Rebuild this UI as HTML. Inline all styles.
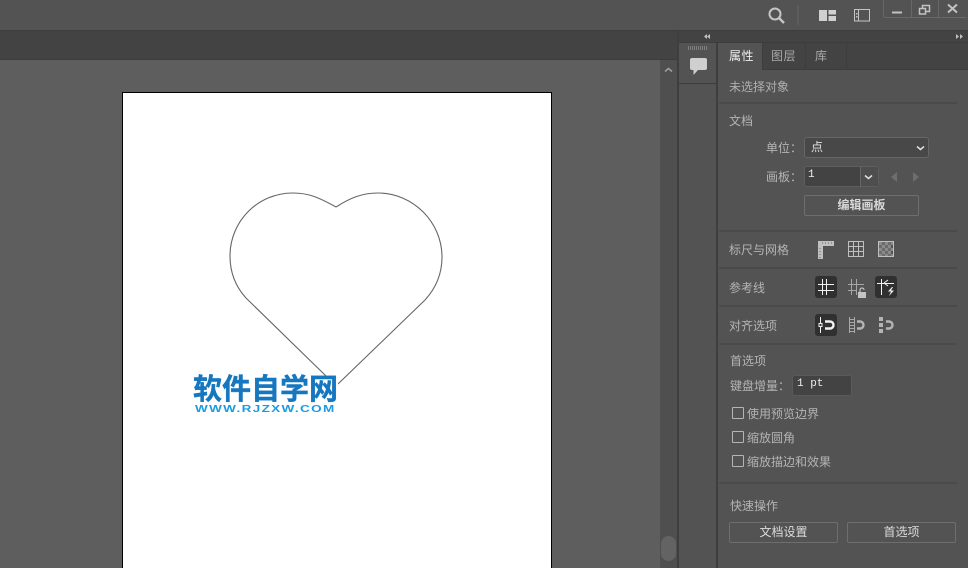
<!DOCTYPE html>
<html><head><meta charset="utf-8">
<style>
html,body{margin:0;padding:0;background:#535353}
#r{position:relative;width:968px;height:568px;overflow:hidden;background:#535353;font-family:"Liberation Sans","Noto Sans CJK SC",sans-serif;font-size:12px;color:#b8b8b8}
.a{position:absolute}
.t{position:absolute;white-space:nowrap;line-height:16px;font-size:12px;color:#b4b4b4}
.l{position:absolute;left:719px;width:238px;height:2px;background:#4a4a4a}
.bx{position:absolute;box-sizing:border-box;border:1px solid #666;border-radius:3px}
.btn{position:absolute;box-sizing:border-box;border:1px solid #6e6e6e;border-radius:2px;text-align:center;color:#dcdcdc;font-size:12px;line-height:19px}
.cb{position:absolute;left:732px;width:12px;height:12px;box-sizing:border-box;border:1px solid #b4b4b4;border-radius:1px}
svg{position:absolute;left:0;top:0}
</style></head><body><div id="r">

<!-- document tab strip and canvas -->
<div class="a" style="left:0;top:30px;width:677px;height:30px;background:#434343;border-top:1px solid #3d3d3d;border-bottom:1px solid #3d3d3d;box-sizing:border-box"></div>
<div class="a" style="left:0;top:60px;width:660px;height:508px;background:#5e5e5e"></div>
<div class="a" style="left:660px;top:60px;width:17px;height:508px;background:#4f4f4f"></div>
<div class="a" style="left:661px;top:536px;width:15px;height:25px;border-radius:8px;background:#636363"></div>

<!-- artboard -->
<div class="a" style="left:122px;top:92px;width:428px;height:480px;background:#fff;border:1px solid #000"></div>

<!-- panel structure -->
<div class="a" style="left:677px;top:30px;width:2px;height:538px;background:#3e3e3e"></div>
<div class="a" style="left:679px;top:30px;width:289px;height:13px;background:#434343;border-top:1px solid #3d3d3d;border-bottom:1px solid #3d3d3d;box-sizing:border-box"></div>
<div class="a" style="left:716px;top:42px;width:2px;height:526px;background:#3e3e3e"></div>
<div class="a" style="left:679px;top:83px;width:37px;height:1px;background:#3d3d3d"></div>
<div class="a" style="left:718px;top:43px;width:250px;height:27px;background:#434343;border-bottom:1px solid #3d3d3d;box-sizing:border-box"></div>
<div class="a" style="left:718px;top:43px;width:44px;height:27px;background:#535353"></div>
<div class="a" style="left:762px;top:43px;width:1px;height:27px;background:#3d3d3d"></div>
<div class="a" style="left:805px;top:43px;width:1px;height:26px;background:#3d3d3d"></div>
<div class="a" style="left:846px;top:43px;width:1px;height:26px;background:#3d3d3d"></div>

<svg width="968" height="568" viewBox="0 0 968 568" fill="none">
  <!-- heart -->
  <path d="M336 207C318 197 308 193 293 193C258 193 230 221 230 256C230 273 236 287 246 298L326 376" stroke="#666" stroke-width="1.1"/>
  <path d="M336 207C350 198 362 193 378 193C413 193 442 222 442 257C442 274 436 288 425 300L338 384" stroke="#666" stroke-width="1.1"/>

  <!-- search -->
  <circle cx="775" cy="14" r="5.500" stroke="#c6c6c6" stroke-width="2"/>
  <path d="M779 18L784 23" stroke="#c6c6c6" stroke-width="2.400"/>
  <path d="M798 5V25" stroke="#606060" stroke-width="1.500"/>
  <!-- workspace icons -->
  <path d="M819 10h8v11h-8zM828.500 10h7.500v4.500h-7.500zM828.500 16h7.500v5h-7.500z" fill="#d0d0d0"/>
  <rect x="854.500" y="9.500" width="15" height="11.500" stroke="#c4c4c4"/>
  <path d="M858.500 10v11" stroke="#c4c4c4"/>
  <path d="M856 13h1.500v1.500h-1.500zM856 16h1.500v1.500h-1.500z" fill="#c4c4c4"/>
  <!-- window controls -->
  <path d="M883.500 0V15.500a2 2 0 0 0 2 2H966.500" stroke="#686868"/>
  <path d="M911.500 0V17M938.500 0V17" stroke="#686868"/>
  <path d="M892 12.500h10" stroke="#c2c2c2" stroke-width="2"/>
  <path d="M919.500 8.500h6v5.500h-6zM922.500 8V5.500h7v6h-3.500" stroke="#c2c2c2" stroke-width="1.500"/>
  <path d="M948 4.500L957 12.500M957 4.500L948 12.500" stroke="#c2c2c2" stroke-width="2"/>

  <!-- collapse arrows -->
  <path d="M707 34l-3 2.500 3 2.500zM710 34l-3 2.500 3 2.500z" fill="#c0c0c0"/>
  <path d="M956 34l3 2.500-3 2.500zM960 34l3 2.500-3 2.500z" fill="#c0c0c0"/>
  <!-- scroll up -->
  <path d="M665 71.500l3.500-3 3.500 3" stroke="#a0a0a0" stroke-width="1.500"/>
  <!-- gripper -->
  <path d="M688.500 46v4M690.500 46v4M692.500 46v4M694.500 46v4M696.500 46v4M698.500 46v4M700.500 46v4M702.500 46v4M704.500 46v4M706.500 46v4" stroke="#7e7e7e" stroke-width="1"/>
  <!-- comment -->
  <path d="M692 58h13a2 2 0 0 1 2 2v8a2 2 0 0 1-2 2h-7l-4.500 5v-5H692a2 2 0 0 1-2-2v-8a2 2 0 0 1 2-2z" fill="#cfcfcf"/>

  <path d="M897 172v10l-6-5z" fill="#6e6e6e"/>
  <path d="M913 172v10l6-5z" fill="#6e6e6e"/>

  <!-- ruler -->
  <path d="M818 241h16v5h-11v13h-5z" fill="#c0c0c0"/>
  <path d="M822 243h1M825 243h1M828 243h1M831 243h1M820 248v1M820 251v1M820 254v1M820 257v1" stroke="#666" stroke-width="1"/>
  <!-- grid -->
  <path d="M848.500 241.500h15v15h-15zM853.500 241.500v15M858.500 241.500v15M848.500 246.500h15M848.500 251.500h15" stroke="#c0c0c0"/>
  <!-- transparency grid -->
  <rect x="878.500" y="241.500" width="15" height="15" stroke="#c0c0c0"/>
  <path d="M879 242h3v3h-3zM885 242h3v3h-3zM891 242h2v3h-2zM882 245h3v3h-3zM888 245h3v3h-3zM879 248h3v3h-3zM885 248h3v3h-3zM891 248h2v3h-2zM882 251h3v3h-3zM888 251h3v3h-3zM879 254h3v2h-3zM885 254h3v2h-3zM891 254h2v2h-2z" fill="#8a8a8a"/>
  <path d="M882 242h3v3h-3zM888 242h3v3h-3zM879 245h3v3h-3zM885 245h3v3h-3zM882 248h3v3h-3zM888 248h3v3h-3zM879 251h3v3h-3zM885 251h3v3h-3zM882 254h3v2h-3zM888 254h3v2h-3z" fill="#6c6c6c"/>

  <!-- guides -->
  <rect x="815" y="276" width="22" height="22" rx="3" fill="#303030"/>
  <path d="M822.500 279v16M826.500 279v16M818 284.500h16M818 290.500h16" stroke="#f2f2f2" stroke-width="1"/>
  <path d="M851.500 279v16M856.500 279v16M848 284.500h16M848 290.500h9" stroke="#a6a6a6" stroke-width="1"/>
  <path d="M858 292h8v6h-8z" fill="#c4c4c4"/>
  <path d="M860 292v-2a2 2 0 0 1 4 0" stroke="#c4c4c4" stroke-width="1.200"/>
  <rect x="875" y="276" width="22" height="22" rx="3" fill="#303030"/>
  <path d="M881.500 279v16M877 283.500h17M884 283l4-3M884 283l4 3" stroke="#f2f2f2" stroke-width="1"/>
  <path d="M892 287l-4 4.500h3l-2 4.500 5-5.500h-3l2-3.500z" fill="#f2f2f2"/>

  <!-- snap -->
  <rect x="815" y="314" width="22" height="22" rx="3" fill="#303030"/>
  <path d="M820.500 317v16" stroke="#f2f2f2"/>
  <rect x="819" y="323.500" width="3" height="3" fill="#303030" stroke="#f2f2f2"/>
  <path d="M825 321.500h5a3 3 0 0 1 0 7h-5" stroke="#f2f2f2" stroke-width="2.400"/>
  <path d="M849.500 317v16M854.500 317v16M849 319.500h5M849 322.500h5M849 325.500h5M849 328.500h5M849 331.500h5" stroke="#a8a8a8"/>
  <path d="M857 321.500h3a3 3 0 0 1 0 7h-3" stroke="#b4b4b4" stroke-width="2.400"/>
  <path d="M879 317h4v4h-4zM879 323h4v4h-4zM879 329h4v4h-4z" fill="#b4b4b4"/>
  <path d="M886 321.500h3a3 3 0 0 1 0 7h-3" stroke="#b4b4b4" stroke-width="2.400"/>
</svg>

<!-- tabs -->
<div class="t" style="left:729px;top:48px;color:#f0f0f0;letter-spacing:.5px">属性</div>
<div class="t" style="left:771px;top:48px;color:#a8a8a8;letter-spacing:.5px">图层</div>
<div class="t" style="left:815px;top:48px;color:#a8a8a8">库</div>

<div class="t" style="left:729px;top:79px;color:#b0b0b0">未选择对象</div>
<div class="l" style="top:102px"></div>

<div class="t" style="left:729px;top:113px">文档</div>
<div class="t" style="left:766px;top:140px">单位：</div>
<div class="bx" style="left:804px;top:137px;width:125px;height:21px;background:#484848"></div>
<div class="t" style="left:811px;top:139px;color:#e0e0e0">点</div>

<div class="t" style="left:766px;top:169px">画板：</div>
<div class="bx" style="left:804px;top:166px;width:75px;height:21px;background:#434343;border-color:#5e5e5e"></div>
<div class="a" style="left:860px;top:166px;width:1px;height:21px;background:#666"></div>
<div class="a" style="left:861px;top:167px;width:17px;height:19px;background:#4e4e4e;border-radius:0 3px 3px 0"></div>
<svg width="968" height="568" viewBox="0 0 968 568" fill="none"><path d="M865 175.500l3.500 3 3.500-3" stroke="#e0e0e0" stroke-width="1.500"/><path d="M917 146.500l3.500 3 3.500-3" stroke="#e0e0e0" stroke-width="1.500"/></svg>
<div class="t" style="left:808px;top:167px;color:#eee;font-family:'Liberation Mono',monospace;font-size:11px">1</div>

<div class="btn" style="left:804px;top:195px;width:115px;height:21px;font-weight:bold;color:#d8d8d8">编辑画板</div>
<div class="l" style="top:230px"></div>

<div class="t" style="left:729px;top:242px">标尺与网格</div>
<div class="l" style="top:267px"></div>
<div class="t" style="left:729px;top:280px">参考线</div>
<div class="l" style="top:305px"></div>
<div class="t" style="left:729px;top:318px">对齐选项</div>
<div class="l" style="top:343px"></div>

<div class="t" style="left:730px;top:353px">首选项</div>
<div class="t" style="left:730px;top:378px">键盘增量：</div>
<div class="bx" style="left:792px;top:375px;width:60px;height:21px;background:#434343;border-color:#5a5a5a"></div>
<div class="t" style="left:797px;top:376px;color:#eee;font-family:'Liberation Mono',monospace;font-size:11px">1 pt</div>

<div class="cb" style="top:407px"></div>
<div class="t" style="left:747px;top:406px">使用预览边界</div>
<div class="cb" style="top:431px"></div>
<div class="t" style="left:747px;top:430px">缩放圆角</div>
<div class="cb" style="top:455px"></div>
<div class="t" style="left:747px;top:454px">缩放描边和效果</div>

<div class="l" style="top:482px"></div>
<div class="t" style="left:730px;top:498px">快速操作</div>
<div class="btn" style="left:729px;top:522px;width:109px;height:21px">文档设置</div>
<div class="btn" style="left:847px;top:522px;width:109px;height:21px">首选项</div>

<!-- watermark -->
<div class="a" style="left:191px;top:377px;width:147px;height:40px;background:#fff"></div>
<div class="a" style="left:193px;top:371px;white-space:nowrap;font-size:29px;line-height:33px;font-weight:bold;color:#1577bf;font-family:'Noto Sans CJK SC',sans-serif;-webkit-text-stroke:.4px #1577bf">软件自学网</div>
<div class="a" style="left:195px;top:405px;white-space:nowrap;font-size:10px;line-height:10px;font-weight:bold;letter-spacing:1px;color:#1d9be2;font-family:'Liberation Sans',sans-serif;transform:scaleX(1.350);transform-origin:0 0">WWW.RJZXW.COM</div>

</div></body></html>
